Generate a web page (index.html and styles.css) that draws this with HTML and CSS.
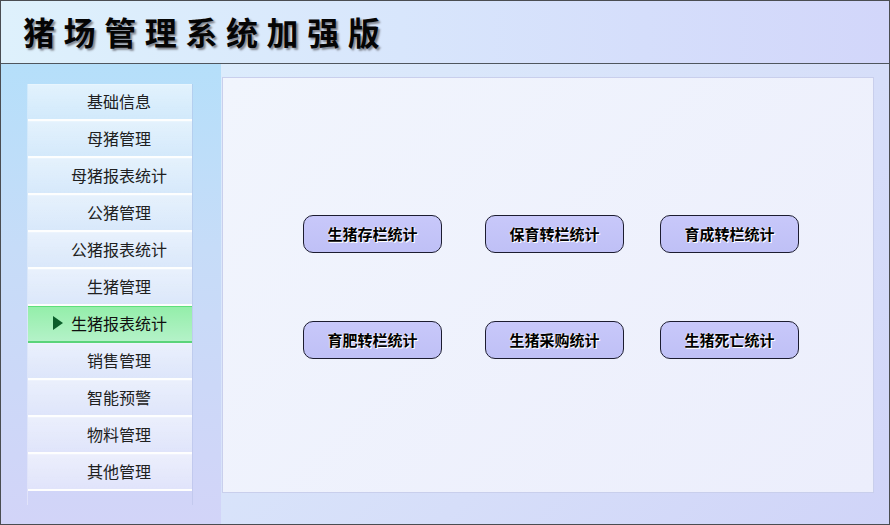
FILE: index.html
```html
<!DOCTYPE html>
<html lang="zh-CN">
<head>
<meta charset="utf-8">
<title>猪场管理系统加强版</title>
<link rel="stylesheet" href="styles.css">
</head>
<body>
<div class="window">
  <header class="header">
    <h1 class="title">猪场管理系统加强版</h1>
  </header>
  <div class="body">
    <aside class="sidebar">
      <ul class="menu">
        <li class="item">基础信息</li>
        <li class="item">母猪管理</li>
        <li class="item">母猪报表统计</li>
        <li class="item">公猪管理</li>
        <li class="item">公猪报表统计</li>
        <li class="item">生猪管理</li>
        <li class="item active"><span class="arrow"></span>生猪报表统计</li>
        <li class="item">销售管理</li>
        <li class="item">智能预警</li>
        <li class="item">物料管理</li>
        <li class="item">其他管理</li>
      </ul>
    </aside>
    <main class="main">
      <section class="panel">
        <div class="grid">
          <button class="btn">生猪存栏统计</button>
          <button class="btn">保育转栏统计</button>
          <button class="btn">育成转栏统计</button>
          <button class="btn">育肥转栏统计</button>
          <button class="btn">生猪采购统计</button>
          <button class="btn">生猪死亡统计</button>
        </div>
      </section>
    </main>
  </div>
</div>
</body>
</html>
```

FILE: styles.css
```css
* { box-sizing: border-box; }
html, body { margin: 0; padding: 0; }
body {
  width: 890px;
  height: 525px;
  overflow: hidden;
  font-family: "Noto Sans CJK SC", "Microsoft YaHei", sans-serif;
  background: #fff;
}
.window {
  width: 890px;
  height: 525px;
  border: 1px solid #4a4d52;
  display: flex;
  flex-direction: column;
}
.header {
  height: 63px;
  flex: none;
  border-bottom: 1px solid #4f565e;
  background: linear-gradient(to right, #def1fc 0%, #d8e6fc 45%, #d2d6fa 100%);
  display: flex;
  align-items: center;
}
.title {
  margin: 0 0 2px 22px;
  font-size: 32px;
  font-weight: 700;
  letter-spacing: 8.6px;
  color: #050505;
  text-shadow: 2px 2px 2px #80858f;
  line-height: 1;
}
.body {
  flex: 1;
  display: flex;
  min-height: 0;
}
.sidebar {
  width: 220px;
  flex: none;
  background: linear-gradient(to bottom, #b5dffa 0%, #c6dcf8 40%, #d2d4f8 100%);
  padding: 20px 0 0 26px;
}
.menu {
  list-style: none;
  margin: 0;
  padding: 0;
  width: 166px;
  height: 421px;
  border-left: 1px solid rgba(255,255,255,0.35);
  border-right: 1px solid rgba(170,180,220,0.35);
}
.item {
  height: 37px;
  padding: 0 0 2px 18px;
  display: flex;
  align-items: center;
  justify-content: center;
  font-size: 16px;
  color: #202020;
  background: linear-gradient(to bottom, rgba(255,255,255,0.6), rgba(255,255,255,0.35));
  border-top: 1px solid rgba(255,255,255,0.5);
  border-bottom: 2px solid rgba(255,255,255,0.95);
  position: relative;
}
.item.active {
  background: linear-gradient(to bottom, #94eeaa, #b4f2c8);
  border-top: 1px solid #5ee07c;
  border-bottom: 2px solid #5ad47a;
  color: #101010;
}
.arrow {
  position: absolute;
  left: 25px;
  top: 50%;
  margin-top: -8px;
  width: 0;
  height: 0;
  border-top: 7px solid transparent;
  border-bottom: 7px solid transparent;
  border-left: 10px solid #0b5e2a;
}
.main {
  flex: 1;
  background: linear-gradient(135deg, #dcecfc 0%, #d6def9 60%, #d0d4f8 100%);
  padding: 13px 15px 31px 1px;
  display: flex;
}
.panel {
  flex: 1;
  background: linear-gradient(135deg, #f1f5fd 0%, #eceefc 100%);
  border: 1px solid #c9cfec;
  padding: 137px 0 0 80px;
}
.grid {
  display: grid;
  grid-template-columns: 182px 175px 139px;
  row-gap: 68px;
}
.btn {
  width: 139px;
  height: 38px;
  border: 1px solid #1c1c30;
  border-radius: 10px;
  background: linear-gradient(to bottom, #c8c8fa, #bfc0f6);
  font-family: "Noto Sans CJK SC", sans-serif;
  font-size: 15px;
  font-weight: 700;
  color: #000;
  text-shadow: 1px 1px 0 #fff, 0 0 2px #fff;
  padding: 0 0 1px 0;
  cursor: pointer;
}
```
